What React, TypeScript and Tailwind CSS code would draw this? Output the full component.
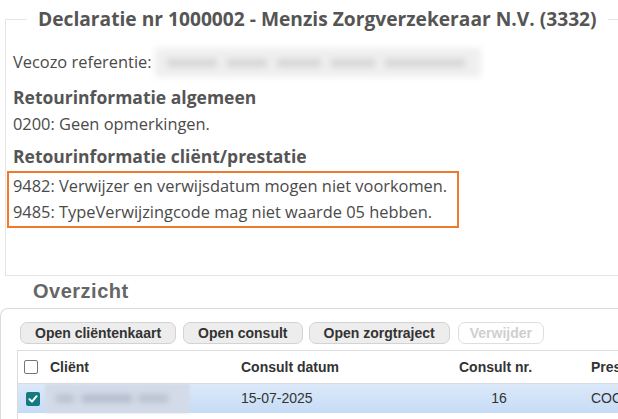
import React from "react";

const top = { fontFamily: '"Open Sans", "Noto Sans", sans-serif' };
const arial = { fontFamily: '"Liberation Sans", Arial, sans-serif' };

function Blur({ className }: { className: string }) {
  return <div className={className} />;
}

function CheckBox({ checked, className }: { checked?: boolean; className?: string }) {
  if (checked) {
    return (
      <div className={"w-[14px] h-[14px] rounded-[2px] bg-[#137b80] flex items-center justify-center " + (className || "")}>
        <svg width="10" height="10" viewBox="0 0 10 10">
          <path d="M1.5 5.2 L4 7.6 L8.6 2.2" stroke="#fff" strokeWidth="2" fill="none" strokeLinecap="round" strokeLinejoin="round" />
        </svg>
      </div>
    );
  }
  return <div className={"w-[14px] h-[14px] rounded-[2px] border border-[#767676] bg-white " + (className || "")} />;
}

export default function App() {
  return (
    <div className="w-[618px] h-[419px] overflow-hidden bg-white relative">
      <fieldset
        className="mt-[7px] ml-[5px] w-[700px] h-[269px] border border-[#e5e5e5] pl-[1px] text-[#4a4a4a]"
        style={top}
      >
        <legend className="ml-[20px] px-[11px] font-bold text-[19.2px] leading-[24px] text-[#555]">
          Declaratie nr 1000002 - Menzis Zorgverzekeraar N.V. (3332)
        </legend>
        <div className="mt-[17px] h-[29px] flex items-center pl-[6px] text-[16.4px]">
          <span>Vecozo referentie:</span>
          <div className="ml-[3px] w-[326px] h-[29px] bg-[#efefef] blur-[3px] flex items-center gap-[10px] px-[12px]">
            <Blur className="w-[50px] h-[8px] bg-[#d6d6d6]" />
            <Blur className="w-[40px] h-[8px] bg-[#d6d6d6]" />
            <Blur className="w-[44px] h-[8px] bg-[#d6d6d6]" />
            <Blur className="w-[44px] h-[8px] bg-[#d6d6d6]" />
            <Blur className="w-[80px] h-[8px] bg-[#d6d6d6]" />
          </div>
        </div>
        <div className="mt-[6px] pl-[6px] font-bold text-[17.5px] leading-[28px] text-[#555]">Retourinformatie algemeen</div>
        <div className="pl-[6px] text-[16.4px] leading-[26px]">0200: Geen opmerkingen.</div>
        <div className="mt-[5px] pl-[6px] font-bold text-[17.5px] leading-[28px] text-[#555]">Retourinformatie cliënt/prestatie</div>
        <div className="mt-[1px] w-[452px] border-2 border-[#f07a2c] pl-[4px] pt-[0px] pb-[1px] text-[16.4px] leading-[26px]">
          <div>9482: Verwijzer en verwijsdatum mogen niet voorkomen.</div>
          <div>9485: TypeVerwijzingcode mag niet waarde 05 hebben.</div>
        </div>
      </fieldset>

      <div style={arial}>
        <div className="mt-[4px] ml-[33px] font-bold text-[20px] tracking-[0.5px] leading-[22px] text-[#666]">Overzicht</div>
        <div className="mt-[6px] w-[700px] border-l border-t border-[#dcdcdc] rounded-tl-[8px] pt-[13px] pl-[16px]">
          <div className="ml-[3px] flex items-center text-[14px] font-bold">
            <div className="h-[22px] px-[14px] flex items-center rounded-[7px] border border-[#d3d3d3] bg-[#ededed] text-[#333]">Open cliëntenkaart</div>
            <div className="ml-[7px] h-[22px] px-[14px] flex items-center rounded-[7px] border border-[#d3d3d3] bg-[#ededed] text-[#333]">Open consult</div>
            <div className="ml-[6px] h-[22px] px-[14px] flex items-center rounded-[7px] border border-[#d3d3d3] bg-[#ededed] text-[#333]">Open zorgtraject</div>
            <div className="ml-[8px] h-[22px] px-[11px] flex items-center rounded-[7px] border border-[#dedede] bg-white text-[#cfcfcf]">Verwijder</div>
          </div>
          <div className="mt-[6px] border-l border-t border-[#dcdcdc] text-[14px] text-[#333] h-[80px]">
            <div className="h-[33px] grid grid-cols-[28px_191px_218px_132px_1fr] items-center font-bold border-b border-[#dcdcdc]">
              <div className="pl-[6px]"><CheckBox /></div>
              <div className="pl-[4px]">Cliënt</div>
              <div className="pl-[4px]">Consult datum</div>
              <div className="pl-[4px]">Consult nr.</div>
              <div className="pl-[4px]">Prestatie</div>
            </div>
            <div className="h-[29px] grid grid-cols-[28px_191px_218px_132px_1fr] items-center bg-gradient-to-b from-[#dce9fa] to-[#c6dcf6]">
              <div className="pl-[8px]"><CheckBox checked /></div>
              <div className="h-full relative">
                <div className="absolute left-[-1px] top-0 w-[145px] h-[29px] bg-[#d3dbe8] blur-[1px]" />
                <div className="absolute left-[10px] top-[11px] w-[18px] h-[7px] bg-[#b5bfcc] blur-[3px]" />
                <div className="absolute left-[36px] top-[11px] w-[50px] h-[7px] bg-[#aeb8c6] blur-[3px]" />
                <div className="absolute left-[92px] top-[11px] w-[30px] h-[7px] bg-[#b5bfcc] blur-[3px]" />
              </div>
              <div className="pl-[4px]">15-07-2025</div>
              <div className="pl-[4px]"><div className="w-[80px] text-center">16</div></div>
              <div className="pl-[4px]">COO</div>
            </div>
          </div>
        </div>
      </div>
    </div>
  );
}
